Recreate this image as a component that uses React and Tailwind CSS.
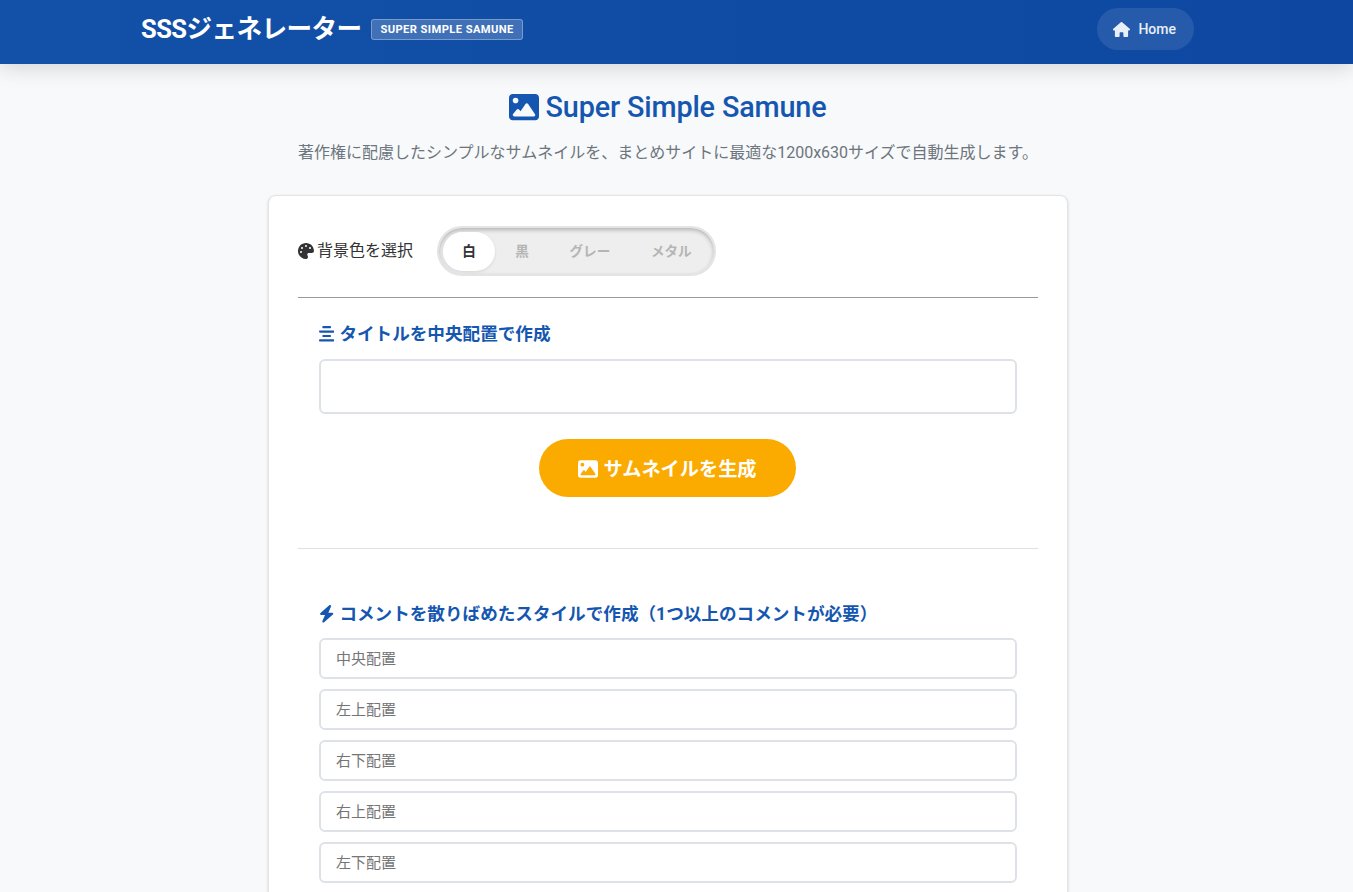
import React from 'react';
import { FaImage, FaHouse, FaPalette, FaAlignCenter, FaBolt } from 'react-icons/fa6';

const colors = ['白', '黒', 'グレー', 'メタル'];
const comments = ['中央配置', '左上配置', '右下配置', '右上配置', '左下配置'];

export default function App() {
    return (
        <div className="h-[892px] overflow-hidden bg-[#f8f9fa] font-['Roboto','Noto_Sans_CJK_JP',sans-serif]">
            <header className="relative h-16 bg-gradient-to-r from-[#1351a8] to-[#0d47a1] shadow-[0_4px_20px_rgba(0,0,0,0.15)]">
                <div className="flex h-16 items-start justify-between pl-[141px] pr-[159px] pt-2">
                    <div className="flex items-center gap-[10px] pt-[8px]">
                        <span className="text-[25.6px] font-bold leading-[26px] tracking-[-0.6px] text-white">SSSジェネレーター</span>
                        <span className="rounded-[3px] border border-white/30 bg-white/20 px-2 py-[1px] text-[11.2px] font-bold leading-[17px] tracking-[0.4px] text-white">
                            SUPER SIMPLE SAMUNE
                        </span>
                    </div>
                    <a className="flex h-[42px] items-center gap-2 rounded-[21px] bg-white/10 pl-4 pr-[18px] text-sm font-medium text-white/90">
                        <FaHouse className="text-[17px]" />
                        Home
                    </a>
                </div>
            </header>

            <main className="flex w-[1336px] flex-col items-center pt-[26px]">
                <h1 className="flex items-center gap-[6px] text-[28.8px] font-medium leading-[34px] tracking-[-0.15px] text-[#1557b0]">
                    <FaImage className="text-[30px]" />
                    Super Simple Samune
                </h1>
                <p className="mt-[17px] text-base leading-[24px] text-[#6c757d]">
                    著作権に配慮したシンプルなサムネイルを、まとめサイトに最適な1200x630サイズで自動生成します。
                </p>

                <section className="mt-[30px] w-[800px] rounded-lg border border-[#e4e4e4] bg-white px-[29px] pt-[30px] shadow-[0_1px_3px_rgba(0,0,0,0.15)]">
                    <div className="flex items-center pb-[21px]">
                        <FaPalette className="text-[16px] text-[#333]" />
                        <span className="ml-[3px] text-base text-[#333]">背景色を選択</span>
                        <div className="ml-[24px] flex h-[50px] w-[279px] items-center rounded-[25px] border-2 border-[#e4e4e4] bg-[#eeeeee] pl-[4px] pr-[2px] shadow-[inset_0_2px_4px_rgba(0,0,0,0.25)]">
                            {colors.map((c, i) => (
                                <span
                                    key={c}
                                    className={
                                        i === 0
                                            ? 'flex h-[39px] w-[52px] items-center justify-center rounded-[20px] bg-white text-[13.6px] font-bold text-[#333] shadow-[0_1px_3px_rgba(0,0,0,0.1)]'
                                            : 'flex h-[39px] flex-auto items-center justify-center text-[13.6px] font-bold text-[#b5b5b5]'
                                    }
                                >
                                    {c}
                                </span>
                            ))}
                        </div>
                    </div>
                    <hr className="border-t border-[#999]" />

                    <div className="px-[21px] pt-[24px]">
                        <h2 className="flex items-center gap-[5px] text-[17.6px] font-bold leading-[24px] text-[#1557b0]">
                            <FaAlignCenter className="h-[17.6px] w-[15.4px]" />
                            タイトルを中央配置で作成
                        </h2>
                        <input
                            type="text"
                            className="mt-[13px] block h-[55px] w-full rounded-md border-2 border-[#dee2e6] bg-white outline-none"
                        />
                        <div className="flex justify-center pr-[1px] pt-[25px]">
                            <button className="flex h-[58px] w-[257px] items-center justify-center gap-[5px] rounded-[29px] bg-[#fbab00] pt-[4px] text-[19.2px] font-bold text-white">
                                <FaImage className="-mt-[2px] text-[20px]" />
                                サムネイルを生成
                            </button>
                        </div>
                    </div>

                    <hr className="mt-[51px] border-t border-[#e0e0e0]" />

                    <div className="px-[21px] pt-[53px]">
                        <h2 className="flex items-center gap-[5px] text-[17.6px] font-bold leading-[24px] text-[#1557b0]">
                            <FaBolt className="h-[17.6px] w-[15.4px]" />
                            コメントを散りばめたスタイルで作成（1つ以上のコメントが必要）
                        </h2>
                        <div className="mt-[12px] flex flex-col gap-[10px] pb-10">
                            {comments.map((c) => (
                                <input
                                    key={c}
                                    type="text"
                                    placeholder={c}
                                    className="block h-[41px] w-full rounded-md border-2 border-[#dee2e6] bg-white px-[15px] text-[15px] text-[#333] outline-none placeholder:text-[#757575]"
                                />
                            ))}
                        </div>
                    </div>
                </section>
            </main>
        </div>
    );
}
